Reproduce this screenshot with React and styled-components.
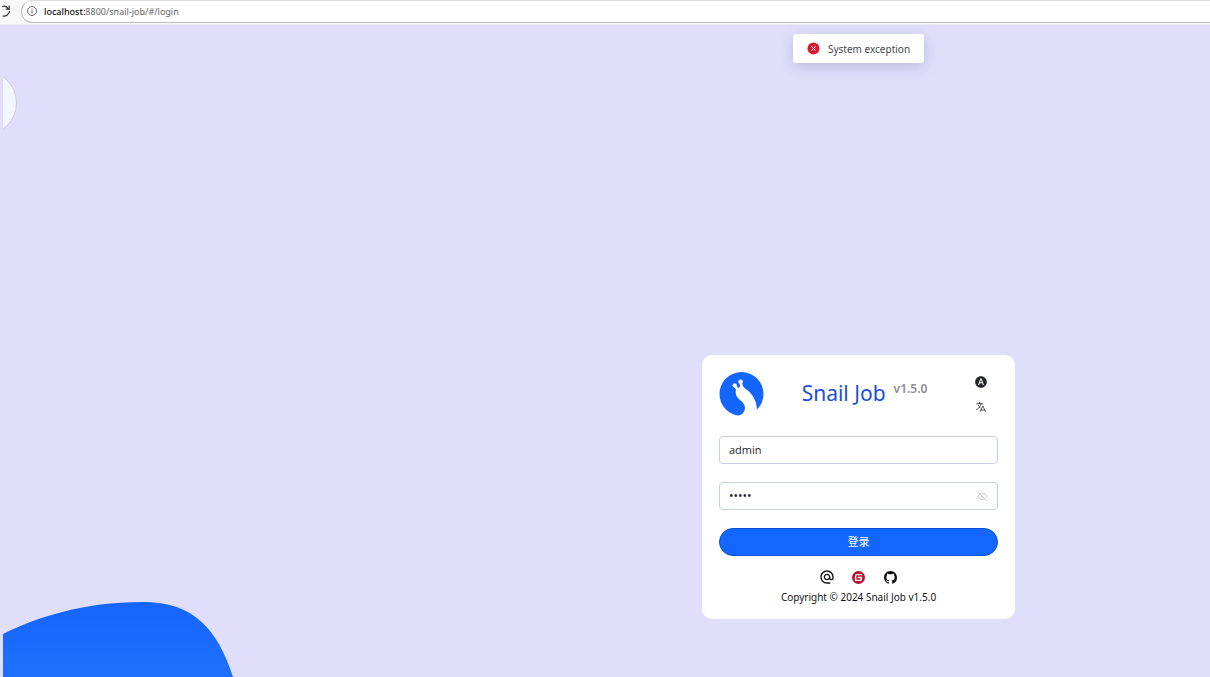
import { useState } from "react";
import styled, { createGlobalStyle } from "styled-components";
import { MdAlternateEmail, MdHdrAuto } from "react-icons/md";
import { HiOutlineLanguage } from "react-icons/hi2";
import { SiGitee } from "react-icons/si";
import { BsGithub } from "react-icons/bs";
import { LuEyeOff } from "react-icons/lu";

const COLORS = {
  primary: "#1366ff",
  title: "#1a50d8",
  backdrop: "#e0defb",
  border: "#c6cfe2",
  text: "#24262b",
  error: "#e0182d",
  gitee: "#b3132b",
};

const GlobalStyle = createGlobalStyle`
  * {
    box-sizing: border-box;
  }
  body {
    margin: 0;
    background-color: ${COLORS.backdrop};
    color: ${COLORS.text};
    font-family: "Noto Sans", "Noto Sans CJK SC", sans-serif;
    font-size: 10px;
  }
  svg {
    display: block;
  }
`;

const Page = styled.div`
  display: flex;
  flex-direction: column;
  min-height: 100vh;
`;

const BrowserBar = styled.header`
  display: flex;
  align-items: center;
  gap: 10px;
  height: 25px;
  padding-bottom: 2px;
  background-color: #f8f8f9;
  border-bottom: 1px solid #ebe9f8;
`;

const ReloadButton = styled.button`
  width: 11px;
  height: 22px;
  padding: 0;
  border: 0;
  background: none;
  color: #333;
`;

const AddressBar = styled.div`
  flex: 1;
  display: flex;
  align-items: center;
  gap: 7px;
  height: 23px;
  padding-left: 5px;
  background-color: #fff;
  border: 1px solid #bdbdbd;
  border-top-color: #dadada;
  border-right: 0;
  border-radius: 12px 0 0 12px;
  font-size: 9px;
  color: #666;
  b {
    font-weight: 500;
    color: #111;
  }
`;

const Stage = styled.main`
  flex: 1;
  position: relative;
  display: grid;
  grid-template-columns: 504px 1fr;
  align-items: center;
  margin-left: 3px;
  padding-top: 272px;
  overflow: hidden;
`;

const SideBubble = styled.div`
  position: absolute;
  top: 45px;
  left: -52px;
  width: 66px;
  height: 66px;
  background-color: #f1f7fc;
  border: 1px solid #cccbd8;
  border-radius: 50%;
`;

const Wave = styled.svg`
  position: absolute;
  left: 0;
  bottom: 0;
`;

const ToastLayer = styled.div`
  position: absolute;
  top: 9px;
  left: 504px;
  right: 0;
  display: flex;
  justify-content: center;
`;

const Toast = styled.div`
  display: flex;
  align-items: center;
  gap: 8px;
  height: 29px;
  padding: 0 14px;
  background-color: #fff;
  border-radius: 3px;
  box-shadow: 0 4px 14px rgba(40, 40, 90, 0.18);
  color: #45474d;
`;

const Card = styled.form`
  grid-column: 2;
  justify-self: center;
  width: 313px;
  padding: 17px 17px 13px;
  background-color: #fff;
  border-radius: 10px;
`;

const CardHeader = styled.div`
  display: flex;
  align-items: center;
  justify-content: space-between;
  height: 44px;
  margin-bottom: 20px;
  padding-right: 10px;
`;

const Title = styled.h1`
  margin: 0;
  padding-bottom: 2px;
  font-size: 21px;
  font-weight: 400;
  line-height: 30px;
  color: ${COLORS.title};
  sup {
    margin-left: 8px;
    font-size: 12px;
    font-weight: 600;
    line-height: 12px;
    color: #8c8c90;
  }
`;

const HeaderTools = styled.div`
  display: flex;
  flex-direction: column;
  align-items: center;
  gap: 12px;
  padding-left: 9px;
`;

const IconButton = styled.button`
  padding: 0;
  border: 0;
  background: none;
  color: ${({ $color }) => $color || COLORS.text};
`;

const Field = styled.label`
  display: flex;
  align-items: center;
  height: 28px;
  margin-bottom: 18px;
  padding: 0 9px;
  border: 1px solid ${COLORS.border};
  border-radius: 4px;
`;

const Input = styled.input`
  flex: 1;
  min-width: 0;
  padding: 0 0 2px;
  border: 0;
  outline: 0;
  background: none;
  color: ${COLORS.text};
  font-family: "Open Sans", sans-serif;
  font-size: ${({ type }) => (type === "password" ? 12 : 11)}px;
`;

const LoginButton = styled.button`
  display: block;
  width: 100%;
  height: 28px;
  padding: 0 0 2px;
  border: 1px solid #0b50d0;
  border-radius: 14px;
  background-color: ${COLORS.primary};
  color: #fff;
  font-family: inherit;
  font-size: 11px;
`;

const Links = styled.nav`
  display: flex;
  justify-content: center;
  align-items: center;
  height: 14px;
  margin: 14px 0 5px;
  a {
    display: flex;
    justify-content: center;
    width: 32px;
    color: #111;
  }
`;

const Copyright = styled.p`
  margin: 0;
  padding-bottom: 1px;
  line-height: 16px;
  text-align: center;
  color: #111;
`;

const Logo = () => (
  <svg width="45" height="44" viewBox="0 0 45 44" role="img" aria-label="Snail Job">
    <circle cx="22.5" cy="22" r="22" fill={COLORS.primary} />
    <path
      fill="#fff"
      d="M14.8 14.5 L17 17.5 L16.6 20.5 C17.2 25 20 27 22.5 29.2 C26.8 33 27 38 23.8 41.3 C22 43.3 19.5 44 17 44 H42 L37.8 39 C38.3 33 36 26 31 20.5 C28.5 17.8 25.3 16.5 24 14.2 L22.7 10 H20.7 L21 14.5 L19 16 L17 13 Z"
    />
    <circle cx="15.7" cy="13.4" r="2.1" fill="#fff" />
    <circle cx="21.6" cy="9.8" r="2.3" fill="#fff" />
  </svg>
);

const ErrorIcon = () => (
  <svg width="13" height="13" viewBox="0 0 13 13" aria-hidden="true">
    <circle cx="6.5" cy="6.5" r="6" fill={COLORS.error} />
    <path d="M4.5 4.5 L8.5 8.5 M8.5 4.5 L4.5 8.5" stroke="#fff" strokeLinecap="round" />
  </svg>
);

const App = () => {
  const [username, setUsername] = useState("admin");
  const [password, setPassword] = useState("admin");
  const [visible, setVisible] = useState(false);

  return (
    <Page>
      <GlobalStyle />
      <BrowserBar>
        <ReloadButton type="button" aria-label="Reload">
          <svg width="11" height="22" viewBox="0 0 11 22" fill="none" stroke="currentColor" strokeWidth="1.2">
            <path d="M2 6.5 C4.5 5.5 7 6.5 8.6 9 M9.3 5.5 V9.2 H5.7 M9.5 11 C9.3 14 6 17 2.5 16" />
          </svg>
        </ReloadButton>
        <AddressBar>
          <svg width="10" height="10" viewBox="0 0 10 10" fill="none" stroke="#666" aria-hidden="true">
            <circle cx="5" cy="5" r="4.5" />
            <path d="M5 4.3 V7.5 M5 2.5 V3.5" />
          </svg>
          <span>
            <b>localhost:</b>8800/snail-job/#/login
          </span>
        </AddressBar>
      </BrowserBar>
      <Stage>
        <SideBubble />
        <Wave width="230" height="75" viewBox="0 0 230 75" aria-hidden="true">
          <defs>
            <linearGradient id="wave" x1="0" y1="0" x2="0" y2="1">
              <stop offset="0" stopColor="#1565ff" />
              <stop offset="1" stopColor="#1f6fff" />
            </linearGradient>
          </defs>
          <path fill="url(#wave)" d="M0 32 C34 15 80 0 140 0 C190 0 214 26 230 75 H0 Z" />
        </Wave>
        <ToastLayer>
          <Toast role="alert">
            <ErrorIcon />
            System exception
          </Toast>
        </ToastLayer>
        <Card onSubmit={(e) => e.preventDefault()}>
          <CardHeader>
            <Logo />
            <Title>
              Snail Job<sup>v1.5.0</sup>
            </Title>
            <HeaderTools>
              <IconButton type="button" aria-label="Theme">
                <MdHdrAuto size={14} />
              </IconButton>
              <IconButton type="button" aria-label="Language">
                <HiOutlineLanguage size={12} />
              </IconButton>
            </HeaderTools>
          </CardHeader>
          <Field>
            <Input
              aria-label="Username"
              value={username}
              onChange={(e) => setUsername(e.target.value)}
            />
          </Field>
          <Field>
            <Input
              aria-label="Password"
              type={visible ? "text" : "password"}
              value={password}
              onChange={(e) => setPassword(e.target.value)}
            />
            <IconButton
              type="button"
              $color="#c6c6c9"
              aria-label="Show password"
              onClick={() => setVisible(!visible)}
            >
              <LuEyeOff size={11} />
            </IconButton>
          </Field>
          <LoginButton type="submit">登录</LoginButton>
          <Links>
            <a href="#email" aria-label="Email">
              <MdAlternateEmail size={16} />
            </a>
            <a href="#gitee" aria-label="Gitee">
              <SiGitee size={13} color={COLORS.gitee} />
            </a>
            <a href="#github" aria-label="GitHub">
              <BsGithub size={13} />
            </a>
          </Links>
          <Copyright>Copyright © 2024 Snail Job v1.5.0</Copyright>
        </Card>
      </Stage>
    </Page>
  );
};

export default App;
